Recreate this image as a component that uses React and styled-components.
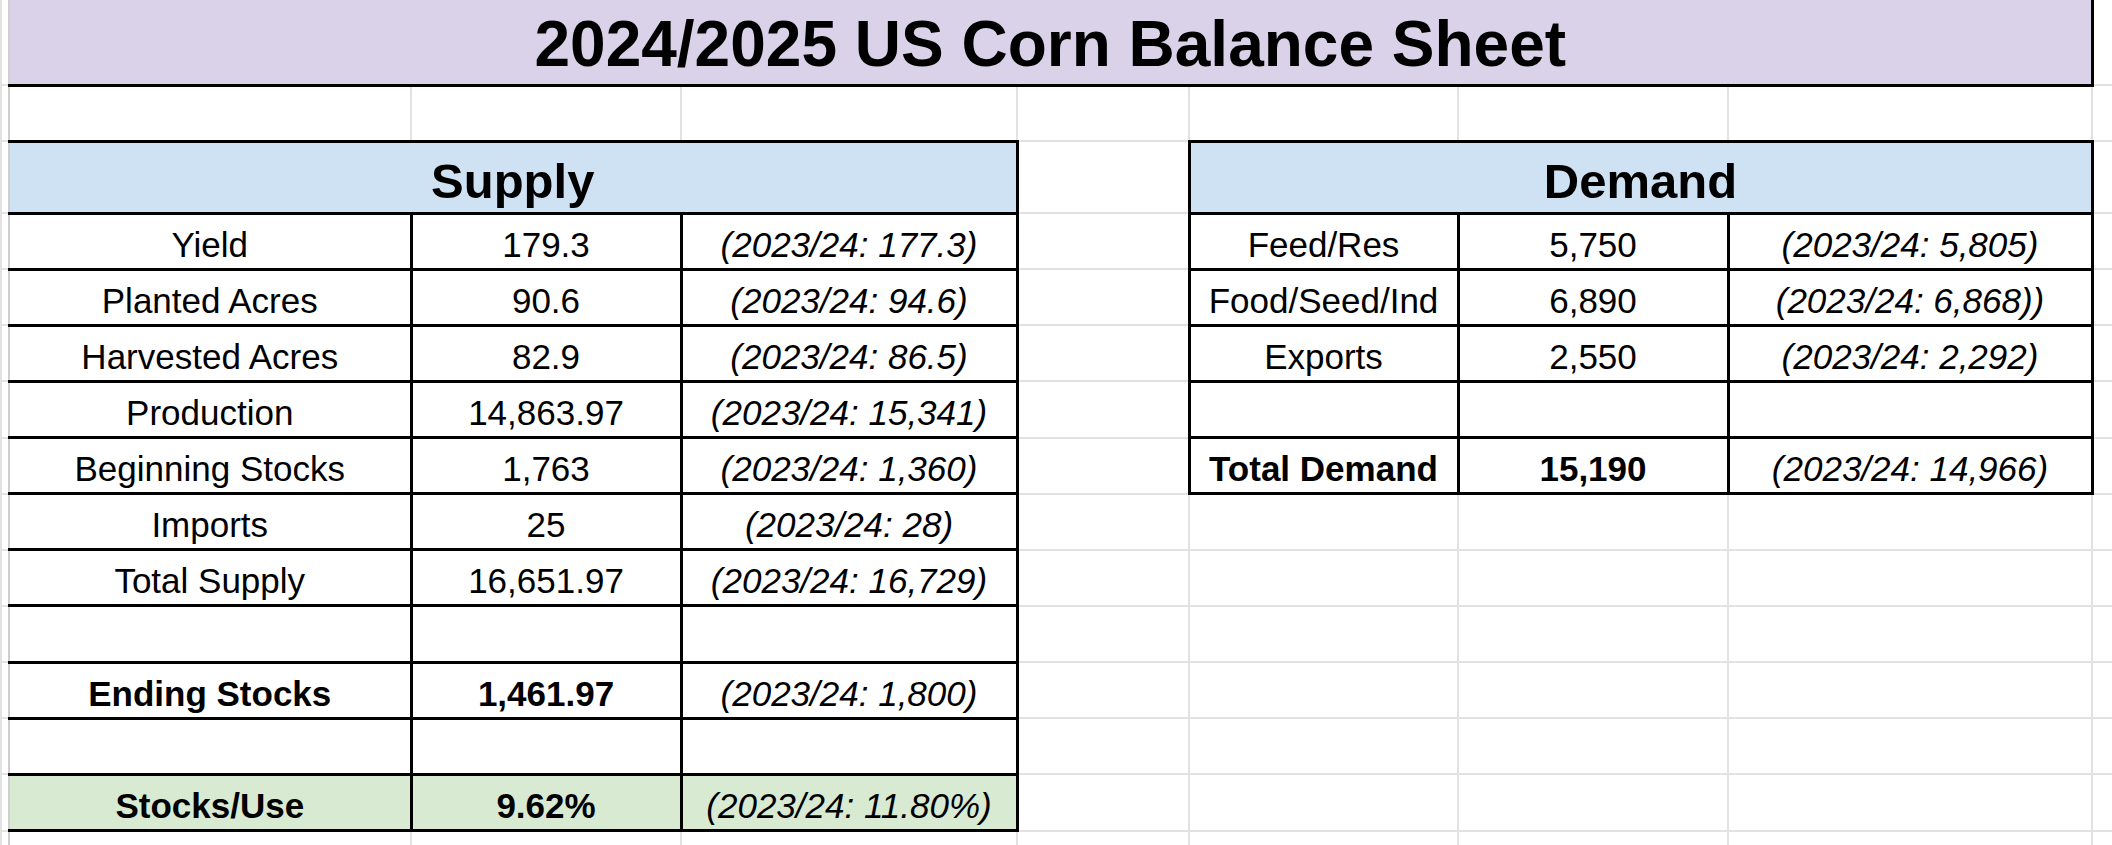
import styled, { createGlobalStyle } from 'styled-components';

// - - - PAGE - - - //
const GlobalStyle = createGlobalStyle`
  html, body {
    margin: 0;
    padding: 0;
    background: #ffffff;
  }
  body {
    width: 2112px;
    height: 845px;
    overflow: hidden;
    font-family: "Liberation Sans", Arial, sans-serif;
    color: #000000;
  }
`;

// - - - SHEET GRID - - - //
const Sheet = styled.table`
  border-collapse: collapse;
  table-layout: fixed;
  width: 2112px;

  tr:first-child td {
    border-top: none;
  }
`;

const Column = styled.col`
  width: ${(p) => p.$w}px;
`;

const Row = styled.tr`
  height: ${(p) => p.$h}px;
`;

const Cell = styled.td`
  padding: 0 4px 3px;
  border: 2px solid #e2e2e2;
  background: ${(p) => p.$fill || 'transparent'};
  text-align: center;
  vertical-align: bottom;
  white-space: nowrap;
  overflow: hidden;
  font-size: ${(p) => p.$size || 35}px;
  font-weight: ${(p) => (p.$bold ? 700 : 400)};
  font-style: ${(p) => (p.$italic ? 'italic' : 'normal')};

  ${(p) => p.$stub && 'border-right-color: #cfcfcf;'}
  ${(p) => p.$boxed && 'border: 3px solid #000000;'}
  ${(p) => p.$openLeft && 'border-left: 2px solid #cfcfcf;'}
`;

// - - - COLOURS - - - //
const PURPLE = '#d9d2e9';
const BLUE = '#cfe2f3';
const GREEN = '#d9ead3';

// spreadsheet columns: row-header stub, A..G, and the sliver of H
const widths = [8, 402, 270, 336, 172, 269, 270, 364, 21];

const supply = [
  { cells: ['Yield', '179.3', '(2023/24: 177.3)'] },
  { cells: ['Planted Acres', '90.6', '(2023/24: 94.6)'] },
  { cells: ['Harvested Acres', '82.9', '(2023/24: 86.5)'] },
  { cells: ['Production', '14,863.97', '(2023/24: 15,341)'] },
  { cells: ['Beginning Stocks', '1,763', '(2023/24: 1,360)'] },
  { cells: ['Imports', '25', '(2023/24: 28)'] },
  { cells: ['Total Supply', '16,651.97', '(2023/24: 16,729)'] },
  { cells: ['', '', ''] },
  { cells: ['Ending Stocks', '1,461.97', '(2023/24: 1,800)'], bold: true },
  { cells: ['', '', ''] },
  { cells: ['Stocks/Use', '9.62%', '(2023/24: 11.80%)'], bold: true, fill: GREEN },
];

const demand = [
  { cells: ['Feed/Res', '5,750', '(2023/24: 5,805)'] },
  { cells: ['Food/Seed/Ind', '6,890', '(2023/24: 6,868))'] },
  { cells: ['Exports', '2,550', '(2023/24: 2,292)'] },
  { cells: ['', '', ''] },
  { cells: ['Total Demand', '15,190', '(2023/24: 14,966)'], bold: true },
];

// one block of three cells (label, value, last year)
const Block = ({ row, first }) =>
  row.cells.map((text, i) => (
    <Cell
      key={i}
      $boxed
      $openLeft={first && i === 0}
      $bold={row.bold && i < 2}
      $italic={i === 2}
      $fill={row.fill}
    >
      {text}
    </Cell>
  ));

const Blank = ({ n }) => Array.from({ length: n }, (_, i) => <Cell key={i} />);

const App = () => {
  return (
    <>
      <GlobalStyle />
      <Sheet>
        <colgroup>
          {widths.map((w, i) => (
            <Column key={i} $w={w} />
          ))}
        </colgroup>
        <tbody>
          {/* Title */}
          <Row $h={85}>
            <Cell $stub />
            <Cell colSpan={7} $boxed $openLeft $fill={PURPLE} $bold $size={64}>
              2024/2025 US Corn Balance Sheet
            </Cell>
            <Cell />
          </Row>

          {/* Spacer */}
          <Row $h={56}>
            <Cell $stub />
            <Blank n={8} />
          </Row>

          {/* Section headers */}
          <Row $h={72}>
            <Cell $stub />
            <Cell colSpan={3} $boxed $openLeft $fill={BLUE} $bold $size={49}>
              Supply
            </Cell>
            <Cell />
            <Cell colSpan={3} $boxed $fill={BLUE} $bold $size={49}>
              Demand
            </Cell>
            <Cell />
          </Row>

          {/* Figures */}
          {supply.map((row, r) => (
            <Row key={r} $h={56.15}>
              <Cell $stub />
              <Block row={row} first />
              <Cell />
              {demand[r] ? <Block row={demand[r]} /> : <Blank n={3} />}
              <Cell />
            </Row>
          ))}

          <Row $h={56}>
            <Cell $stub />
            <Blank n={8} />
          </Row>
        </tbody>
      </Sheet>
    </>
  );
};

export default App;
